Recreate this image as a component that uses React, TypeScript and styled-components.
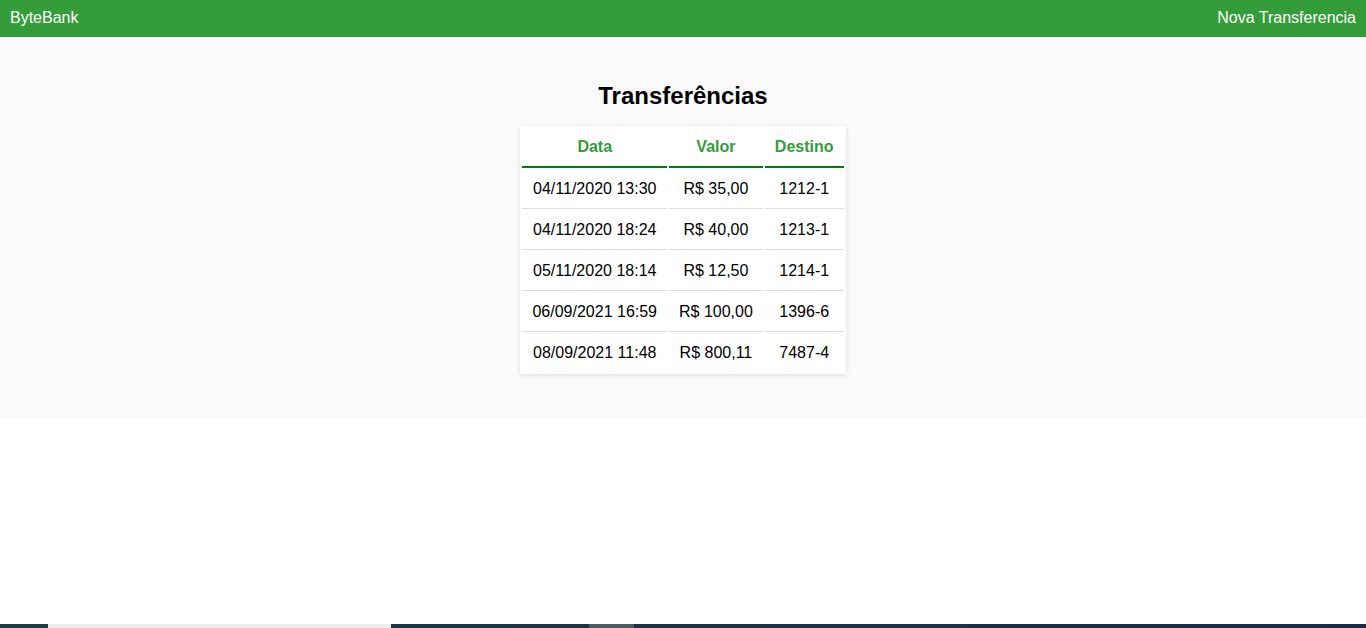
import React from "react";
import styled, { createGlobalStyle } from "styled-components";

const Global = createGlobalStyle`
  html, body { margin: 0; padding: 0; background: #ffffff; }
  body { font-family: "Liberation Sans", Arial, sans-serif; }
`;

const Page = styled.div`
  min-height: 100vh;
  display: flex;
  flex-direction: column;
`;

const NavBar = styled.header`
  height: 37px;
  background: #359c3a;
  color: #ffffff;
  display: flex;
  align-items: center;
  justify-content: space-between;
  padding: 0 10px;
  font-size: 16px;
`;

const NavLink = styled.a`
  color: #ffffff;
  text-decoration: none;
  line-height: 18px;
  margin-top: -1px;
`;

const Main = styled.main`
  background: #fafafa;
  padding: 45px 0 44px;
  display: flex;
  flex-direction: column;
  align-items: center;
`;

const Title = styled.h2`
  margin: 0 0 16px;
  font-size: 24px;
  line-height: 28px;
  font-weight: bold;
  color: #000;
`;

const Card = styled.table`
  background: #ffffff;
  border-spacing: 2px;
  box-shadow: 0 1px 5px rgba(0, 0, 0, 0.12);
  font-size: 16px;
`;

const HeadCell = styled.th`
  height: 38px;
  padding: 0 10px;
  color: #359c3a;
  font-weight: bold;
  text-align: center;
  border-bottom: 2px solid #008000;
`;

const Cell = styled.td<{ $last?: boolean }>`
  height: 38px;
  padding: 0 10px;
  text-align: center;
  color: #000;
  white-space: nowrap;
  border-bottom: ${(p) => (p.$last ? "none" : "1px solid #dddddd")};
`;

const Spacer = styled.div`
  flex: 1;
`;

const Taskbar = styled.div`
  height: 4px;
  display: flex;
  background: linear-gradient(90deg, #1f3a42, #1c2b45);
`;

const TaskSeg = styled.div<{ $w: number; $c: string }>`
  width: ${(p) => p.$w}px;
  background: ${(p) => p.$c};
  flex-shrink: 0;
`;

const rows = [
  ["04/11/2020 13:30", "R$ 35,00", "1212-1"],
  ["04/11/2020 18:24", "R$ 40,00", "1213-1"],
  ["05/11/2020 18:14", "R$ 12,50", "1214-1"],
  ["06/09/2021 16:59", "R$ 100,00", "1396-6"],
  ["08/09/2021 11:48", "R$ 800,11", "7487-4"],
];

export default function App() {
  return (
    <Page>
      <Global />
      <NavBar>
        <NavLink href="#">ByteBank</NavLink>
        <NavLink href="#">Nova Transferencia</NavLink>
      </NavBar>
      <Main>
        <Title>Transferências</Title>
        <Card>
          <thead>
            <tr>
              <HeadCell>Data</HeadCell>
              <HeadCell>Valor</HeadCell>
              <HeadCell>Destino</HeadCell>
            </tr>
          </thead>
          <tbody>
            {rows.map((r, i) => (
              <tr key={i}>
                {r.map((c, j) => (
                  <Cell key={j} $last={i === rows.length - 1}>
                    {c}
                  </Cell>
                ))}
              </tr>
            ))}
          </tbody>
        </Card>
      </Main>
      <Spacer />
      <Taskbar>
        <TaskSeg $w={48} $c="#1f3a42" />
        <TaskSeg $w={343} $c="#ececec" />
        <TaskSeg $w={198} $c="transparent" />
        <TaskSeg $w={45} $c="#4b5b61" />
      </Taskbar>
    </Page>
  );
}
